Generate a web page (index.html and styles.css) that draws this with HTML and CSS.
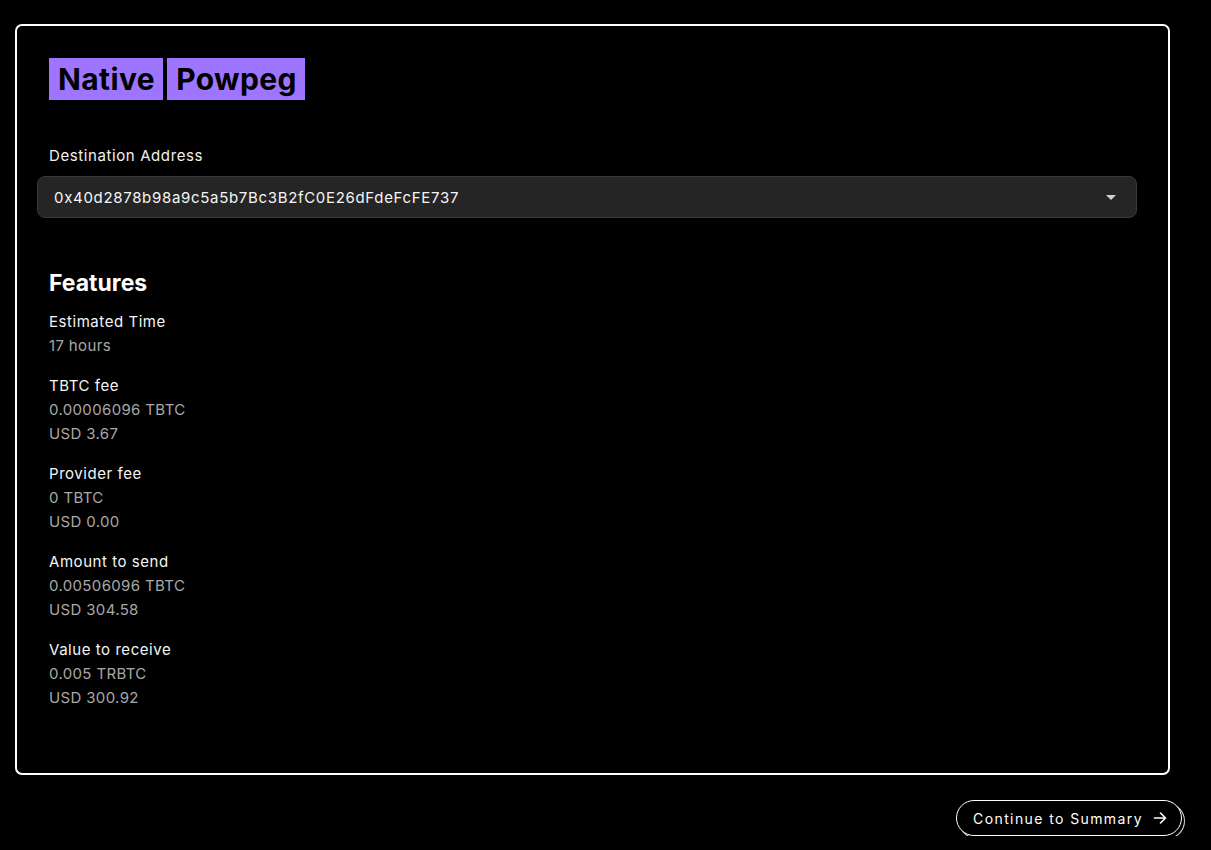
FILE: index.html
```html
<!DOCTYPE html>
<html>
<head>
<meta charset="utf-8">
<link rel="stylesheet" href="styles.css">
</head>
<body>
<div class="page">
  <div class="card">
    <div class="logo">
      <span class="logo-word">Native</span>
      <span class="logo-word">Powpeg</span>
    </div>
    <div class="field">
      <div class="field-label">Destination Address</div>
      <div class="select">
        <span class="select-value">0x40d2878b98a9c5a5b7Bc3B2fC0E26dFdeFcFE737</span>
        <svg class="caret" width="10" height="5" viewBox="0 0 10 5"><path d="M0 0h10L5 5z" fill="#d0d0d0"/></svg>
      </div>
    </div>
    <h2 class="features-title">Features</h2>
    <div class="features">
      <div class="feature">
        <div class="f-label">Estimated Time</div>
        <div class="f-value">17 hours</div>
      </div>
      <div class="feature">
        <div class="f-label">TBTC fee</div>
        <div class="f-value">0.00006096 TBTC</div>
        <div class="f-value">USD 3.67</div>
      </div>
      <div class="feature">
        <div class="f-label">Provider fee</div>
        <div class="f-value">0 TBTC</div>
        <div class="f-value">USD 0.00</div>
      </div>
      <div class="feature">
        <div class="f-label">Amount to send</div>
        <div class="f-value">0.00506096 TBTC</div>
        <div class="f-value">USD 304.58</div>
      </div>
      <div class="feature">
        <div class="f-label">Value to receive</div>
        <div class="f-value">0.005 TRBTC</div>
        <div class="f-value">USD 300.92</div>
      </div>
    </div>
  </div>
  <div class="actions">
    <button class="continue">
      <span>Continue to Summary</span>
      <svg width="14" height="14" viewBox="0 0 14 14" fill="none" stroke="#fff" stroke-width="1.6" stroke-linecap="round" stroke-linejoin="round"><path d="M1.5 7h11M7.5 2l5 5-5 5"/></svg>
    </button>
  </div>
</div>
</body>
</html>
```
FILE: styles.css
```css
* { box-sizing: border-box; }
html, body { margin: 0; padding: 0; background: #000; }
body {
  font-family: Inter, "Noto Sans", "Liberation Sans", sans-serif;
  color: #fff;
}
.page {
  padding: 24px 41px 0 15px;
}
.card {
  border: 2px solid #fff;
  border-radius: 7px;
  padding: 32px 32px 64px 32px;
  height: 751px;
}
.logo {
  display: flex;
  gap: 4px;
}
.logo-word {
  background: #9e75ff;
  color: #000;
  font-weight: 700;
  font-size: 30px;
  line-height: 42px;
  padding: 0 8px 0 9px;
  letter-spacing: 0.4px;
}
.field {
  margin-top: 44px;
}
.field-label {
  font-size: 15px;
  line-height: 24px;
  color: #f0f0f0;
  letter-spacing: 0.6px;
}
.select {
  margin: 8px 0 0 -12px;
  height: 42px;
  width: 1100px;
  background: #252525;
  border: 1px solid #3a3a3a;
  border-radius: 8px;
  display: flex;
  align-items: center;
  justify-content: space-between;
  padding: 0 20px 0 16px;
}
.select-value {
  font-size: 15px;
  letter-spacing: 0.68px;
  color: #f5f5f5;
}
.caret { display: block; }
.features-title {
  margin: 51px 0 0 0;
  font-size: 23px;
  line-height: 28px;
  font-weight: 700;
}
.features {
  margin-top: 13px;
  display: flex;
  flex-direction: column;
  gap: 16px;
}
.f-label {
  font-size: 15px;
  line-height: 24px;
  color: #f5f5f5;
  letter-spacing: 0.55px;
}
.f-value {
  font-size: 15px;
  line-height: 24px;
  color: #a8a8a8;
  letter-spacing: 0.35px;
}
.actions {
  display: flex;
  justify-content: flex-end;
  margin-top: 25px;
  margin-right: -12px;
}
.continue {
  height: 36px;
  width: 226px;
  border: 1px solid #fff;
  border-radius: 18px;
  background: #000;
  color: #fff;
  font-family: inherit;
  font-size: 14px;
  letter-spacing: 1.4px;
  display: flex;
  align-items: center;
  justify-content: center;
  gap: 10px;
  padding: 0 14px 0 16px;
  box-shadow: 3px 3px 0 -1px #000, 3px 3px 0 0 #ddd;
}
```
